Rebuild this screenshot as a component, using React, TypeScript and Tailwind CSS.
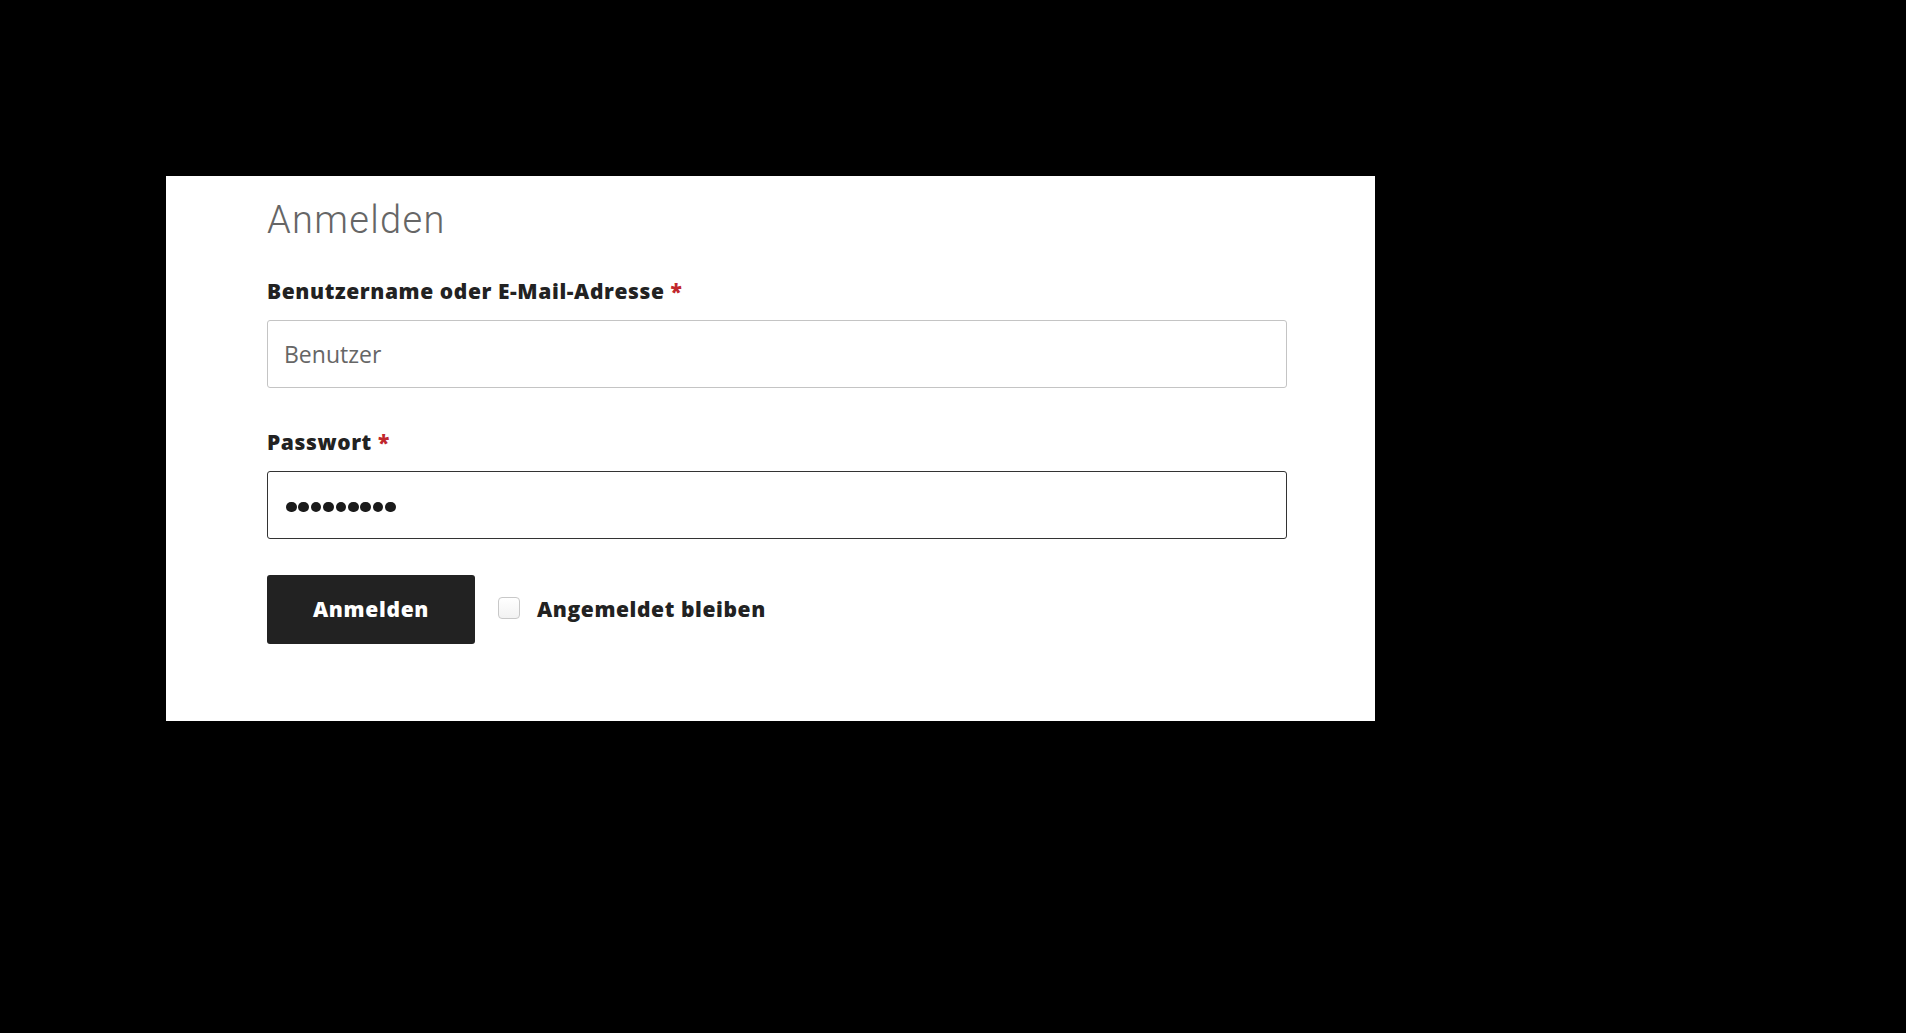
import React from "react";

export default function App() {
  const dots = [0, 1, 2, 3, 4, 5, 6, 7, 8];
  return (
    <div className="w-[1906px] h-[1033px] bg-black pt-[176px] pl-[166px] font-['Roboto',sans-serif]">
      <div className="w-[1209px] h-[545px] bg-white pl-[101px] pr-[88px] pt-[25px]">
        <h2 className="text-[38px] leading-[38px] font-light text-[#666] tracking-[1.3px]">Anmelden</h2>

        <label className="block mt-[42px] text-[21px] leading-[20px] font-extrabold text-[#222] tracking-[0.6px] font-['Open_Sans',sans-serif]">
          Benutzername oder E-Mail-Adresse <span className="text-[#c1272d]">*</span>
        </label>
        <div className="mt-[19px] h-[68px] border border-[#c4c4c4] rounded-[3px] flex items-center pl-[16px] text-[23px] text-[#666] font-['Open_Sans',sans-serif]">
          Benutzer
        </div>

        <label className="block mt-[44px] text-[21px] leading-[20px] font-extrabold text-[#222] tracking-[0.6px] font-['Open_Sans',sans-serif]">
          Passwort <span className="text-[#c1272d]">*</span>
        </label>
        <div className="mt-[19px] h-[68px] border border-[#333] rounded-[3px] flex items-center pl-[18px] pt-[4px] gap-[1.8px]">
          {dots.map((d) => (
            <span key={d} className="w-[10.6px] h-[10.6px] rounded-full bg-[#1a1a1a]" />
          ))}
        </div>

        <div className="mt-[36px] flex items-center">
          <button className="w-[208px] h-[69px] bg-[#222] rounded-[3px] text-white text-[21px] font-extrabold tracking-[0.7px] font-['Open_Sans',sans-serif]">
            Anmelden
          </button>
          <span className="ml-[23px] mb-[3px] w-[22px] h-[22px] border border-[#c8c8c8] rounded-[4px] bg-gradient-to-b from-white to-[#f2f2f2]" />
          <span className="ml-[17px] text-[21px] font-extrabold text-[#222] tracking-[0.6px] font-['Open_Sans',sans-serif]">Angemeldet bleiben</span>
        </div>
      </div>
    </div>
  );
}
